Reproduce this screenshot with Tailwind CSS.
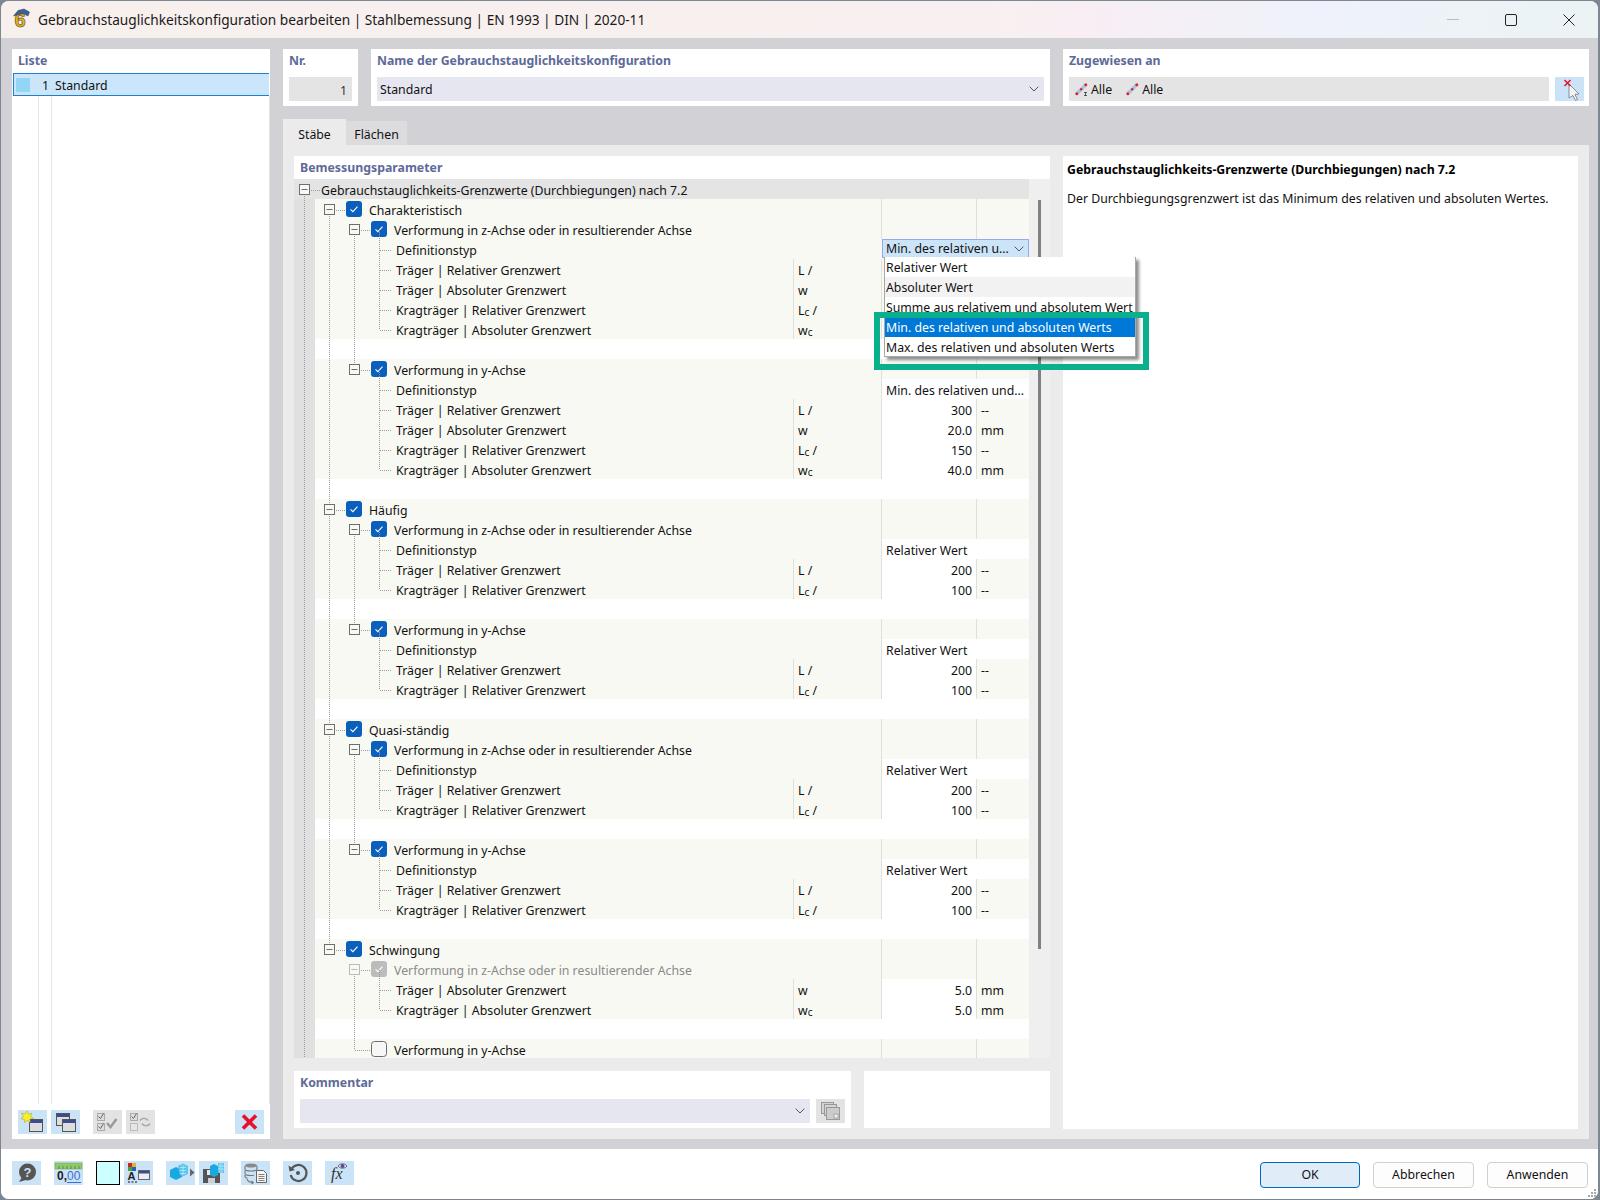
<!DOCTYPE html>
<html lang="de">
<head>
    <meta charset="utf-8">
    <title>Gebrauchstauglichkeitskonfiguration bearbeiten</title>
    <script src="https://cdn.jsdelivr.net/npm/@tailwindcss/browser@4"></script>
</head>
<body class="bg-[#7d8791] h-[1200px] w-[1600px] overflow-hidden font-['Noto_Sans',sans-serif] text-[12.3px] text-[#111]">
    <svg class="hidden">
        <symbol id="cb-on" viewBox="0 0 16 16"><rect width="16" height="16" rx="3" fill="#0a5fbd"/><path d="M4.5 8.3l2.4 2.3 4.6-5" fill="none" stroke="#fff" stroke-width="1.1"/></symbol>
        <symbol id="cb-dis" viewBox="0 0 16 16"><rect width="16" height="16" rx="3" fill="#bcbcbc"/><path d="M4.5 8.3l2.4 2.3 4.6-5" fill="none" stroke="#fff" stroke-width="1.1"/></symbol>
        <symbol id="cb-off" viewBox="0 0 16 16"><rect x=".5" y=".5" width="15" height="15" rx="3" fill="#f7f7f7" stroke="#6c6c6c"/></symbol>
        <symbol id="chev" viewBox="0 0 10 6"><path d="M.7.7L5 5l4.3-4.3" fill="none" stroke="#555" stroke-width="1"/></symbol>
        <symbol id="bar" viewBox="0 0 13 13"><path d="M2 10.500l8.500-8.500" stroke="#a9c4e4" stroke-width="3.400"/><circle cx="1.800" cy="10.700" r="1.500" fill="#d9252f"/><circle cx="6.200" cy="6.300" r="1.200" fill="#d9252f"/><circle cx="10.800" cy="1.800" r="1.500" fill="#d9252f"/></symbol>
    </svg>

    <div class="ml-px mt-px w-[1597px] h-[1198px] rounded-[8px] overflow-hidden flex flex-col bg-white">
        <!-- titlebar -->
        <div class="h-[37px] flex items-center bg-[linear-gradient(90deg,#f7f0ed_0%,#f8f0f0_62%,#f8eef4_68%,#eff2fa_82%,#ebf3f5_100%)]">
            <svg class="ml-[9px] w-[21px] h-[27px]" viewBox="0 0 21 27">
                <text x="10" y="21" text-anchor="middle" font-family="Liberation Sans" font-weight="700" font-size="20" fill="#e7b52a" stroke="#6b5412" stroke-width=".7">6</text>
                <path d="M3.500 10L8 4.500l6-1.500 5.500 3-1.500 4-5-2.500-4 1z" fill="#3f6190" stroke="#233f66" stroke-width=".5"/>
            </svg>
            <div class="ml-[7px] pt-[2px] text-[13.7px] text-[#1a1a1a] whitespace-nowrap">Gebrauchstauglichkeitskonfiguration bearbeiten | Stahlbemessung | EN 1993 | DIN | 2020-11</div>
            <div class="ml-auto flex">
                <div class="w-[58px] h-[37px] flex items-center justify-center"><div class="w-3 h-px bg-[#bdbdbd]"></div></div>
                <div class="w-[58px] h-[37px] flex items-center justify-center"><div class="w-3 h-3 border border-[#222] rounded-[2px]"></div></div>
                <div class="w-[58px] h-[37px] flex items-center justify-center">
                    <svg class="w-3 h-3" viewBox="0 0 12 12"><path d="M.5.500l11 11M11.500.500l-11 11" stroke="#222" stroke-width="1"/></svg>
                </div>
            </div>
        </div>

        <!-- main -->
        <div class="flex-1 bg-[#d2d1d6] flex gap-[13px] pl-[11px] pr-[9px] pt-[11px] pb-[10px] min-h-0">
            <!-- Liste -->
            <div class="w-[258px] bg-white flex flex-col">
                <div class="h-6 pl-[6px] pt-[3px] font-bold text-[#5e6a99]">Liste</div>
                <div class="mx-px h-[23px] flex items-center bg-[#cbe6fb] border border-[#1f7fd0] border-x-0 border-l">
                    <div class="ml-[2px] w-[14px] h-[14px] bg-[#93d5f5]"></div>
                    <div class="w-[19px] text-right pt-1">1</div>
                    <div class="ml-[6px] pt-1">Standard</div>
                </div>
                <div class="flex-1 border-r border-[#e4e4e4]">
                    <div class="ml-[26px] w-[14px] h-full border-x border-[#e6e6e6]"></div>
                </div>
                <div class="h-[35px] pt-[6px] px-[6px] flex">
                    <button class="w-[29px] h-6 bg-[#cbe3f7] flex items-center justify-center">
                        <svg class="w-[29px] h-6" viewBox="0 0 29 24"><rect x="11.500" y="9.500" width="13" height="12" fill="#ddd" stroke="#555"/><rect x="12" y="10" width="12" height="3" fill="#3d4c8f"/><path d="M9 1l1.500 3.200 3.400-1-1.500 3.200 3 2-3.500.6.300 3.400-3-2.200-2.500 2.600-.4-3.500-3.500-.4 2.700-2.400L3.500 3l3.300.9z" fill="#f7ee2e" stroke="#a89b18" stroke-width=".5"/></svg>
                    </button>
                    <button class="ml-1 w-[29px] h-6 bg-[#cbe3f7] flex items-center justify-center">
                        <svg class="w-[29px] h-6" viewBox="0 0 29 24"><rect x="5.500" y="3.500" width="13" height="12" fill="#ddd" stroke="#555"/><rect x="6" y="4" width="12" height="3" fill="#3d4c8f"/><rect x="11.500" y="9.500" width="13" height="12" fill="#ddd" stroke="#555"/><rect x="12" y="10" width="12" height="3" fill="#3d4c8f"/></svg>
                    </button>
                    <button class="ml-[13px] w-[29px] h-6 bg-[#e3e3e3] flex items-center justify-center">
                        <svg class="w-[29px] h-6" viewBox="0 0 29 24"><rect x="4.500" y="3.500" width="7" height="7" fill="#ddd" stroke="#aaa"/><rect x="4.500" y="13.500" width="7" height="7" fill="#ddd" stroke="#aaa"/><path d="M5.500 6.500l2 2 3-5M5.500 16.500l2 2 3-5" fill="none" stroke="#666"/><path d="M14 13l3.500 4 6-8" fill="none" stroke="#999" stroke-width="2.400"/></svg>
                    </button>
                    <button class="ml-1 w-[29px] h-6 bg-[#e3e3e3] flex items-center justify-center">
                        <svg class="w-[29px] h-6" viewBox="0 0 29 24"><rect x="4.500" y="3.500" width="7" height="7" fill="#ddd" stroke="#aaa"/><rect x="4.500" y="13.500" width="7" height="7" fill="#e6e6e6" stroke="#bbb"/><path d="M5.500 6.500l2 2 3-5" fill="none" stroke="#666"/><path d="M14 10.500c2-3 6-3 8 0M24 13.500c-2 3-6 3-8 0" fill="none" stroke="#aaa" stroke-width="1.600"/></svg>
                    </button>
                    <button class="ml-auto w-[29px] h-6 bg-[#cbe3f7] flex items-center justify-center">
                        <svg class="w-[29px] h-6" viewBox="0 0 29 24"><path d="M8 5.500l13 13M21 5.500l-13 13" stroke="#e8102a" stroke-width="3.600"/></svg>
                    </button>
                </div>
            </div>

            <!-- right column -->
            <div class="flex-1 flex flex-col min-w-0">
                <div class="h-[57px] flex gap-[13px]">
                    <div class="w-[75px] bg-white px-[6px]">
                        <div class="h-7 pt-[3px] font-bold text-[#5e6a99]">Nr.</div>
                        <div class="h-6 bg-[#e4e4e4] flex items-center justify-end pr-[5px] pt-1 text-[#333]">1</div>
                    </div>
                    <div class="w-[679px] bg-white px-[6px]">
                        <div class="h-7 pt-[3px] font-bold text-[#5e6a99]">Name der Gebrauchstauglichkeitskonfiguration</div>
                        <div class="h-6 bg-[#e6e6f1] flex items-center pl-[3px] pr-[5px]">
                            <span class="pt-[2px]">Standard</span>
                            <svg class="ml-auto w-[10px] h-[6px]"><use href="#chev"/></svg>
                        </div>
                    </div>
                    <div class="flex-1 bg-white pl-[6px] pr-[5px]">
                        <div class="h-7 pt-[3px] font-bold text-[#5e6a99]">Zugewiesen an</div>
                        <div class="flex gap-[6px]">
                            <div class="flex-1 h-6 bg-[#e4e4e4] flex items-center pl-[6px]">
                                <svg class="w-[13px] h-[13px] shrink-0" viewBox="0 0 13 13"><use href="#bar"/><path d="M9 9.500h3M10.500 9.500v3M9 12.500h3" stroke="#333" stroke-width=".8" fill="none"/></svg>
                                <span class="ml-[3px] pt-[3px]">Alle</span>
                                <svg class="ml-[14px] w-[13px] h-[13px] shrink-0"><use href="#bar"/></svg>
                                <span class="ml-[3px] pt-[3px]">Alle</span>
                            </div>
                            <button class="w-[29px] h-6 bg-[#cbe3f7]">
                                <svg class="w-[29px] h-6" viewBox="0 0 29 24"><path d="M14 7l10 10-4 .5 2.500 5-2 1-2.500-5L14 21z" fill="#f4f4f4" stroke="#777" stroke-width=".8"/><path d="M9.500 3l6 6M15.500 3l-6 6" stroke="#e8102a" stroke-width="1.500"/></svg>
                            </button>
                        </div>
                    </div>
                </div>

                <!-- tabs -->
                <div class="mt-[13px] h-[26px] flex items-end">
                    <div class="w-[63px] h-[26px] pt-[6px] bg-[#ebebeb] flex items-center justify-center">Stäbe</div>
                    <div class="w-[61px] h-6 pt-1 bg-[#dcdcdf] flex items-center justify-center">Flächen</div>
                </div>

                <!-- tab body -->
                <div class="flex-1 bg-[#ebebeb] pt-[11px] px-[11px] pb-[10px] flex gap-[13px] min-h-0">
                    <div class="relative w-[756px] flex flex-col">
                        <div class="h-[23px] bg-white pl-[6px] pt-[3px] font-bold text-[#5e6a99]">Bemessungsparameter</div>
                        <div class="h-[879px] flex bg-white overflow-hidden">
                            <div id="tree" class="relative w-[735px] overflow-hidden"></div>
                            <div class="w-[21px] bg-[#efefef]">
                                <div class="mx-auto mt-[21px] w-[3px] h-[749px] bg-[#808080]"></div>
                            </div>
                        </div>
                        <div class="mt-[13px] h-[57px] flex gap-[13px]">
                            <div class="w-[557px] bg-white px-[6px]">
                                <div class="h-7 pt-[3px] font-bold text-[#5e6a99]">Kommentar</div>
                                <div class="flex gap-[6px]">
                                    <div class="flex-1 h-6 bg-[#e6e6f1] flex items-center justify-end pr-[5px]">
                                        <svg class="w-[10px] h-[6px]"><use href="#chev"/></svg>
                                    </div>
                                    <button class="w-[29px] h-6 bg-[#e3e3e3]">
                                        <svg class="w-[29px] h-6" viewBox="0 0 29 24"><rect x="5.500" y="3.500" width="12" height="11" fill="#d4d4d4" stroke="#999"/><rect x="8.500" y="5.500" width="12" height="11" fill="#d4d4d4" stroke="#999"/><rect x="10.500" y="8.500" width="13" height="12" fill="#ccc" stroke="#999"/><rect x="18" y="15" width="4" height="4" fill="#eee" stroke="#888" stroke-width=".6"/></svg>
                                    </button>
                                </div>
                            </div>
                            <div class="flex-1 bg-white"></div>
                        </div>

                        <!-- open dropdown -->
                        <div class="absolute left-[590px] top-[101px] w-[252px] h-[100px] bg-white border border-[#a8a8a8] border-t-0 shadow-[3px_3px_3px_rgba(0,0,0,0.45)] z-10">
                            <div class="h-5 pl-px pt-[2px] flex items-center">Relativer Wert</div>
                            <div class="h-5 pl-px pt-[2px] flex items-center bg-[#f2f2f2]">Absoluter Wert</div>
                            <div class="h-5 pl-px pt-[2px] flex items-center whitespace-nowrap">Summe aus relativem und absolutem Wert</div>
                            <div class="h-5 pl-px pt-[2px] flex items-center bg-[#0078d7] text-white">Min. des relativen und absoluten Werts</div>
                            <div class="h-5 pl-px pt-[2px] flex items-center">Max. des relativen und absoluten Werts</div>
                        </div>
                        <!-- highlight frame -->
                        <div class="absolute left-[580px] top-[156px] w-[275px] h-[58px] border-[6px] border-[#0aaf8c] z-20"></div>
                    </div>

                    <div class="flex-1 bg-white pl-1 pt-[5px]">
                        <div class="font-bold h-[29px] text-black">Gebrauchstauglichkeits-Grenzwerte (Durchbiegungen) nach 7.2</div>
                        <div>Der Durchbiegungsgrenzwert ist das Minimum des relativen und absoluten Wertes.</div>
                    </div>
                </div>
            </div>
        </div>

        <!-- footer -->
        <div class="relative h-[50px] bg-white flex pl-[11px] pr-[10px] pt-3">
            <button class="w-[29px] h-6 bg-[#cbe3f7]">
                <svg class="w-[29px] h-6" viewBox="0 0 29 24"><circle cx="15.500" cy="11" r="8.500" fill="#555"/><path d="M10 16l-3 5 7-2z" fill="#555"/><text x="15.500" y="15.500" text-anchor="middle" font-family="Liberation Sans" font-weight="700" font-size="13" fill="#cbe3f7">?</text></svg>
            </button>
            <button class="ml-[13px] w-[29px] h-6 bg-[#cbe3f7]">
                <svg class="w-[29px] h-6" viewBox="0 0 29 24"><rect x="1" y="2" width="27" height="6" fill="#8fc96a" stroke="#6d9e4e" stroke-width=".5"/><path d="M5 5v3M9 5v3M13 5v3M17 5v3M21 5v3M25 5v3" stroke="#4d7a33" stroke-width=".7"/><text x="3" y="19" font-family="Liberation Sans" font-weight="700" font-size="12" fill="#222">0,</text><text x="13" y="19" font-family="Liberation Sans" font-size="12" fill="#3b6fd6">00</text><path d="M13 21.500h14" stroke="#3b6fd6" stroke-width="1.200"/></svg>
            </button>
            <div class="ml-[13px] w-6 h-6 bg-[#ccffff] border border-black"></div>
            <button class="ml-1 w-[29px] h-6 bg-[#cbe3f7]">
                <svg class="w-[29px] h-6" viewBox="0 0 29 24"><rect x="4" y="2" width="4" height="4" fill="#c9262c"/><rect x="8" y="2" width="4" height="4" fill="#e8b321"/><rect x="4" y="6" width="4" height="4" fill="#3fa34d"/><rect x="8" y="6" width="4" height="4" fill="#2a5fc0"/><text x="3.500" y="19" font-family="Liberation Sans" font-weight="700" font-size="11" fill="#222">A</text><path d="M4 21h2M7.500 21h2M11 21h2" stroke="#555" stroke-width="1.500"/><rect x="14.500" y="9.500" width="11" height="9" fill="#eee" stroke="#666"/><rect x="15" y="10" width="10" height="2.500" fill="#3d4c8f"/></svg>
            </button>
            <button class="ml-[13px] w-[29px] h-6 bg-[#cbe3f7]">
                <svg class="w-[29px] h-6" viewBox="0 0 29 24"><path d="M4 9l6-3 6 3v7l-6 3-6-3z" fill="#19a9e0"/><path d="M12 5l5-2.500L22 5v8l-5 2.500-3-1.500z" fill="#5cc5ee"/><path d="M17 4v10M14 6.500h6M14 9.500h6M14 12.500h6" stroke="#d8f1fb" stroke-width=".6"/><path d="M24 7.500l4.500 4-4.500 4z" fill="#666"/></svg>
            </button>
            <button class="ml-1 w-[29px] h-6 bg-[#cbe3f7]">
                <svg class="w-[29px] h-6" viewBox="0 0 29 24"><path d="M4 8h15l2 2v12H4z" fill="#555"/><rect x="8" y="9" width="9" height="5" fill="#e8e8e8"/><rect x="9" y="17" width="7" height="5" fill="#cfcfcf"/><path d="M11 5l4-2 4 2v9l-4 2-4-2z" fill="#19a9e0"/><rect x="19" y="2" width="6" height="10" fill="#5cc5ee"/><path d="M21 2v10M23 2v10M19 5h6M19 8h6" stroke="#e3f5fc" stroke-width=".5"/></svg>
            </button>
            <button class="ml-[13px] w-[29px] h-6 bg-[#cbe3f7]">
                <svg class="w-[29px] h-6" viewBox="0 0 29 24"><ellipse cx="10" cy="4.500" rx="6" ry="2" fill="#8a8a8a"/><path d="M4 5v3c0 1.200 3 2 6 2s6-.800 6-2V5M4 9.500v3c0 1.200 3 2 6 2 1 0 2 0 3-.300M4 14v1.500c0 1 1 1.500 2.500 1.800" fill="none" stroke="#777" stroke-width="1.100"/><path d="M6 18c1 2.500 3 3.500 6 3.500M10.500 20l1.800 1.600-1.800 1.400" fill="none" stroke="#777" stroke-width="1.100"/><path d="M15.500 9.500h7l3 3v9h-10z" fill="#f4f4f4" stroke="#666"/><path d="M17.500 13.500h6M17.500 15.500h6M17.500 17.500h6M17.500 19.500h6" stroke="#666" stroke-width=".8"/></svg>
            </button>
            <button class="ml-[13px] w-[29px] h-6 bg-[#cbe3f7]">
                <svg class="w-[29px] h-6" viewBox="0 0 29 24"><path d="M8.500 8a8 8 0 1 1-.800 6" fill="none" stroke="#555" stroke-width="2.200"/><path d="M5.500 4.500l1 6 5.500-1.500z" fill="#555"/><circle cx="15" cy="12" r="2" fill="#555"/></svg>
            </button>
            <button class="ml-[13px] w-[29px] h-6 bg-[#cbe3f7]">
                <svg class="w-[29px] h-6" viewBox="0 0 29 24"><text x="6" y="18" font-family="Liberation Serif" font-style="italic" font-size="16" fill="#333">fx</text><path d="M13 5c2-3 7-3 9 0-2 3-7 3-9 0z" fill="#dcecf8" stroke="#444" stroke-width=".7"/><circle cx="17.500" cy="5" r="2" fill="#6a3fa0"/></svg>
            </button>

            <div class="ml-auto flex gap-[13px] pt-px">
                <button class="w-[100px] h-[26px] rounded-[4px] bg-[#e0ecf8] border border-[#0067c0]">OK</button>
                <button class="w-[101px] h-[26px] rounded-[4px] bg-[#fdfdfd] border border-[#d0d0d0]">Abbrechen</button>
                <button class="w-[101px] h-[26px] rounded-[4px] bg-[#fdfdfd] border border-[#d0d0d0]">Anwenden</button>
            </div>
            <svg class="absolute right-[1px] bottom-[1px] w-[10px] h-[10px]" viewBox="0 0 10 10"><path d="M7 1h2v2H7zM4 4h2v2H4zM7 4h2v2H7zM1 7h2v2H1zM4 7h2v2H4zM7 7h2v2H7z" fill="#aaa"/></svg>
        </div>
    </div>

    <script>
        // tree rows of the Bemessungsparameter table
        const strip = '<div class="w-[21px] h-5 bg-[#e0e0e0] shrink-0"></div>';

        function unitHtml(u) {
            if (u === 'Lc') return '<span>L<span class="text-[10px] relative top-px">c</span> /</span>';
            if (u === 'wc') return '<span>w<span class="text-[10px] relative top-px">c</span></span>';
            return u;
        }

        function head(text, pad, box, cls) {
            return `<div class="flex h-5">${strip}<div class="flex-1 flex bg-[#f8f9f3]">
                <div class="w-[566px] h-5 flex items-center ${pad}"><svg class="w-4 h-4 shrink-0"><use href="#${box}"/></svg><span class="ml-[7px] relative top-[2px] ${cls}">${text}</span></div>
                <div class="w-[95px] h-5 border-l border-[#e0e0da]"></div>
                <div class="flex-1 h-5 border-l border-[#e0e0da]"></div>
            </div></div>`;
        }

        function cat(text) { return head(text, 'pl-[31px]', 'cb-on', ''); }
        function sub(text, box, cls) { return head(text, 'pl-[56px]', box || 'cb-on', cls || ''); }
        function blank() { return `<div class="flex h-5">${strip}<div class="flex-1 bg-white"></div></div>`; }

        function def(text) {
            return `<div class="flex h-5">${strip}<div class="flex-1 flex bg-[#f8f9f3]">
                <div class="w-[566px] h-5 flex items-center pl-[81px] pt-1">Definitionstyp</div>
                <div class="flex-1 h-5 bg-white flex items-center pl-1 pt-1 border-l border-[#e0e0da] whitespace-nowrap">${text}</div>
            </div></div>`;
        }

        function defOpen() {
            return `<div class="flex h-5">${strip}<div class="flex-1 flex bg-[#f8f9f3]">
                <div class="w-[567px] h-5 flex items-center pl-[81px] pt-1">Definitionstyp</div>
                <div class="flex-1 h-[19px] bg-[#cce4f7] border border-[#9aa6ee] flex items-center pl-[3px] pr-1 whitespace-nowrap"><span class="pt-[2px]">Min. des relativen u...</span><svg class="ml-auto w-[10px] h-[6px]"><use href="#chev"/></svg></div>
            </div></div>`;
        }

        function leaf(text, unit, val, u2) {
            return `<div class="flex h-5">${strip}<div class="flex-1 flex bg-[#f8f9f3]">
                <div class="w-[478px] h-5 flex items-center pl-[81px] pt-1">${text}</div>
                <div class="w-[88px] h-5 flex items-center pl-1 pt-1 border-l border-[#e0e0da]">${unitHtml(unit)}</div>
                <div class="w-[95px] h-5 flex items-center justify-end pr-1 pt-1 border-l border-[#e0e0da] ${val ? 'bg-white' : ''}">${val}</div>
                <div class="flex-1 h-5 flex items-center pl-1 pt-1 border-l border-[#e0e0da]">${u2}</div>
            </div></div>`;
        }

        const Z = 'Verformung in z-Achse oder in resultierender Achse';
        const Y = 'Verformung in y-Achse';
        const TR = 'Träger | Relativer Grenzwert', TA = 'Träger | Absoluter Grenzwert';
        const KR = 'Kragträger | Relativer Grenzwert', KA = 'Kragträger | Absoluter Grenzwert';

        function shortGroup(name) {
            return sub(name) + def('Relativer Wert') + leaf(TR, 'L /', '200', '--') + leaf(KR, 'Lc', '100', '--');
        }

        let html = `<div class="h-5 bg-[#e4e4e4] flex items-center pl-[27px] pt-1 whitespace-nowrap">Gebrauchstauglichkeits-Grenzwerte (Durchbiegungen) nach 7.2</div>`;
        html += cat('Charakteristisch') + sub(Z) + defOpen();
        html += leaf(TR, 'L /', '', '') + leaf(TA, 'w', '', '') + leaf(KR, 'Lc', '', '') + leaf(KA, 'wc', '', '');
        html += blank() + sub(Y) + def('Min. des relativen und...');
        html += leaf(TR, 'L /', '300', '--') + leaf(TA, 'w', '20.0', 'mm') + leaf(KR, 'Lc', '150', '--') + leaf(KA, 'wc', '40.0', 'mm');
        html += blank() + cat('Häufig') + shortGroup(Z) + blank() + shortGroup(Y) + blank();
        html += cat('Quasi-ständig') + shortGroup(Z) + blank() + shortGroup(Y) + blank();
        html += cat('Schwingung') + sub(Z, 'cb-dis', 'text-[#8a8a8a]');
        html += leaf(TA, 'w', '5.0', 'mm') + leaf(KA, 'wc', '5.0', 'mm');
        html += blank() + sub(Y, 'cb-off');

        // dotted connectors and expander boxes lie over the rows
        const cy = i => 20 * i + 11;
        let dots = '', boxes = '';
        const v = (x, a, b) => { dots += `M${x} ${a}V${b}`; };
        const h = (a, b, y) => { dots += `M${a} ${y + 0.5}H${b}`; };
        const box = (x, i, dim) => {
            const c = dim ? '#bbbbbb' : '#6e6e6e';
            boxes += `<rect x="${x - 5}" y="${cy(i) - 5.5}" width="10" height="10" fill="#f8f9f3" stroke="${c}"/><path d="M${x - 3} ${cy(i) - 0.5}h6" stroke="${c}"/>`;
        };
        v(10.5, cy(0), 879); box(10.5, 0); h(15, 26, cy(0));
        v(35.5, cy(1), cy(38));
        [[1, [[2, 3, 7], [9, 10, 14]]], [16, [[17, 18, 20], [22, 23, 25]]], [27, [[28, 29, 31], [33, 34, 36]]]].forEach(([c, gr]) => {
            box(35.5, c); h(40, 51, cy(c));
            v(60.5, cy(gr[0][0]), cy(gr[1][0]));
            gr.forEach(([b, a, z]) => {
                box(60.5, b); h(65, 76, cy(b));
                v(85.5, cy(b), cy(z));
                for (let i = a; i <= z; i++) h(86, 98, cy(i));
            });
        });
        box(35.5, 38); h(40, 51, cy(38));
        v(60.5, cy(39), cy(43)); box(60.5, 39, true); h(65, 76, cy(39)); h(61, 76, cy(43));
        v(85.5, cy(39), cy(41)); h(86, 98, cy(40)); h(86, 98, cy(41));

        html += `<svg class="absolute left-0 top-0 w-[110px] h-[879px]" viewBox="0 0 110 879"><path d="${dots}" stroke="#9a9a9a" stroke-dasharray="1 1" fill="none"/>${boxes}</svg>`;
        document.getElementById('tree').innerHTML = html;
    </script>
</body>
</html>
